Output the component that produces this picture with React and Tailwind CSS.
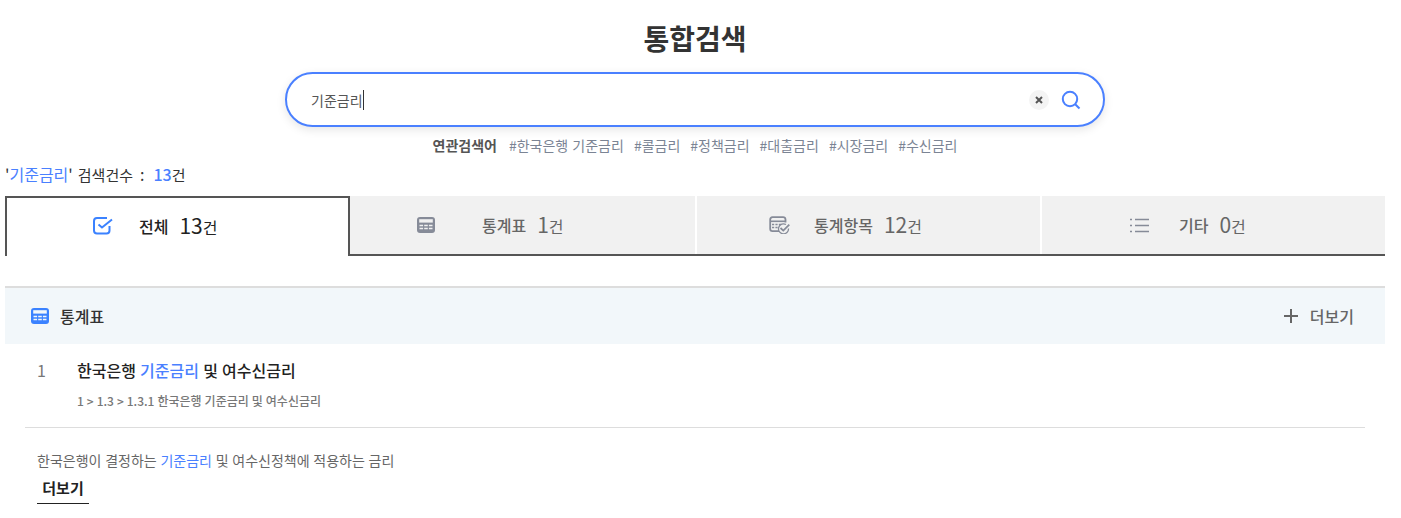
import React from "react";

const font = { fontFamily: '"Noto Sans CJK KR", "Noto Sans", sans-serif' };

const CheckIcon = () => (
  <svg width="20" height="18" viewBox="0 0 20 18" fill="none">
    <path d="M16.5 9v4.5A3 3 0 0 1 13.5 16.5H4A3 3 0 0 1 1 13.5V4A3 3 0 0 1 4 1h10" stroke="#3b82ff" strokeWidth="2" />
    <path d="M5.5 7.5l3.5 3L19 2.5" stroke="#3b82ff" strokeWidth="2" />
  </svg>
);

const TableIcon = ({ color, bg }) => (
  <svg width="18" height="16" viewBox="0 0 18 16">
    <rect width="18" height="16" rx="3" fill={color} />
    <rect x="2.2" y="2.2" width="13.6" height="3.4" fill={bg} />
    <path d="M2.5 8.5h3.6M7.2 8.5h3.6M11.9 8.5h3.6M2.5 11.5h3.6M7.2 11.5h3.6M11.9 11.5h3.6" stroke={bg} strokeWidth="1.6" />
  </svg>
);

const ItemIcon = () => (
  <svg width="21" height="18" viewBox="0 0 21 18" fill="none">
    <path d="M10 15.2H3.5A2.5 2.5 0 0 1 1.2 12.7V3.5A2.5 2.5 0 0 1 3.5 1.2h10.5a2.5 2.5 0 0 1 2.5 2.3v3" stroke="#868b98" strokeWidth="1.8" />
    <rect x="1" y="4.5" width="15" height="1.6" fill="#868b98" />
    <path d="M3 8.5h2.2M6.4 8.5h2.2M9.8 8.5h2.2M3 11.5h2.2M6.4 11.5h2.2" stroke="#868b98" strokeWidth="1.5" />
    <path d="M19.5 12.5a5 5 0 1 1-2.5-4" stroke="#868b98" strokeWidth="1.3" />
    <path d="M11.5 12l2.8 2.6 6-6" stroke="#868b98" strokeWidth="1.8" />
  </svg>
);

const ListIcon = () => (
  <svg width="19" height="15" viewBox="0 0 19 15" fill="none">
    <path d="M0 1.5h2M5 1.5h14M0 7.5h2M5 7.5h14M0 13.5h2M5 13.5h14" stroke="#868b98" strokeWidth="1.5" />
  </svg>
);

const tabs = [
  { icon: <TableIcon color="#868b98" bg="#f1f1f1" />, label: "통계표", num: "1", box: "w-[345px] pl-[67px]", iconW: "w-[65px]" },
  { icon: <ItemIcon />, label: "통계항목", num: "12", box: "w-[345px] pl-[72px] border-l-2 border-white", iconW: "w-[45px]" },
  { icon: <ListIcon />, label: "기타", num: "0", box: "flex-1 pl-[88px] border-l-2 border-white", iconW: "w-[49px]" },
];

const keywords = ["#한국은행 기준금리", "#콜금리", "#정책금리", "#대출금리", "#시장금리", "#수신금리"];

export default function App() {
  return (
    <div className="w-[1401px] h-[518px] overflow-hidden bg-white pl-[5px] pr-4" style={font}>
      <h1 className="text-center text-[28px] leading-[42px] font-bold text-[#333] pt-[17px]">통합검색</h1>

      <div className="mx-auto mt-[13px] w-[820px] h-[55px] rounded-full border-2 border-[#4a80ff] bg-white shadow-[0_3px_10px_rgba(0,0,0,0.1)] flex items-center pl-6 pr-[22px]">
        <span className="flex-1 text-sm leading-[20px] text-[#555]">
          <span className="border-r border-[#333]">기준금리</span>
        </span>
        <span className="w-5 h-5 rounded-full bg-[#f4f4f4] flex items-center justify-center mr-3">
          <svg width="8" height="8" viewBox="0 0 8 8"><path d="M1 1l6 6M7 1l-6 6" stroke="#555" strokeWidth="2" /></svg>
        </span>
        <svg width="20" height="20" viewBox="0 0 20 20" fill="none">
          <circle cx="9" cy="9" r="7.2" stroke="#4a80ff" strokeWidth="2" />
          <path d="M14.2 14.2l4.3 4.3" stroke="#4a80ff" strokeWidth="2" />
        </svg>
      </div>

      <div className="flex justify-center gap-[10px] mt-[8px] text-sm leading-[20px] text-[#7b8494] [word-spacing:1px]">
        <span className="font-bold text-[#555] mr-[2px]">연관검색어</span>
        {keywords.map((k) => <span key={k}>{k}</span>)}
      </div>

      <p className="h-[20px] text-[15px] leading-[20px] text-[#333] mt-[7px]">
        <span className="text-base">'<span className="text-[#4a80ff]">기준금리</span>'</span>
        <span className="ml-[5px]">검색건수</span>
        <span className="ml-[7px] text-base">:</span>
        <span className="ml-[9px] text-base text-[#4a80ff] font-medium">13</span>건
      </p>

      <div className="flex mt-[14px] h-[60px]">
        <div className="w-[345px] border-2 border-b-0 border-[#555] flex items-center pl-[86px] text-[#222] pb-[2px]">
          <span className="w-[46px]"><CheckIcon /></span>
          <span className="text-base font-medium">전체</span>
          <span className="text-[21px] ml-[11px]">13<span className="text-base">건</span></span>
        </div>
        <div className="flex-1 flex border-b-2 border-[#555] bg-[#f1f1f1] text-[#666]">
          {tabs.map((t) => (
            <div key={t.label} className={`${t.box} flex items-center`}>
              <span className={t.iconW}>{t.icon}</span>
              <span className="text-base font-medium">{t.label}</span>
              <span className="text-[21px] ml-[11px]">{t.num}<span className="text-base">건</span></span>
            </div>
          ))}
        </div>
      </div>

      <div className="mt-[30px] h-[58px] border-t-2 border-[#ddd] bg-[#f2f7fa] flex items-center justify-between pl-[26px] pr-[31px]">
        <div className="flex items-center gap-[11px]">
          <TableIcon color="#3b82ff" bg="#f2f7fa" />
          <span className="text-base font-medium text-[#333]">통계표</span>
        </div>
        <div className="flex items-center gap-[12px] text-[#666]">
          <svg width="14" height="14" viewBox="0 0 14 14"><path d="M7 0v14M0 7h14" stroke="#666" strokeWidth="2" /></svg>
          <span className="text-base font-medium">더보기</span>
        </div>
      </div>

      <div className="mx-5 border-b border-[#ddd] h-[84px] pt-[14px]">
        <div className="flex">
          <span className="w-[52px] pl-3 text-base leading-[24px] text-[#777]">1</span>
          <div>
            <p className="text-base leading-[24px] font-medium text-[#222] [word-spacing:0.6px]">
              한국은행 <span className="text-[#4a80ff]">기준금리</span> 및 여수신금리
            </p>
            <p className="text-xs leading-[16px] font-medium text-[#777] mt-[11px] [word-spacing:0.3px]">1 &gt; 1.3 &gt; 1.3.1 한국은행 기준금리 및 여수신금리</p>
          </div>
        </div>
      </div>

      <div className="pl-8 pt-[22px]">
        <p className="text-sm leading-[20px] text-[#666] [word-spacing:0.6px]">
          한국은행이 결정하는 <span className="text-[#4a80ff]">기준금리</span> 및 여수신정책에 적용하는 금리
        </p>
        <span className="mt-[8px] block w-[52px] h-[26px] border-b border-[#222] text-center text-[15px] leading-[20px] font-bold text-[#222]">더보기</span>
      </div>
    </div>
  );
}
